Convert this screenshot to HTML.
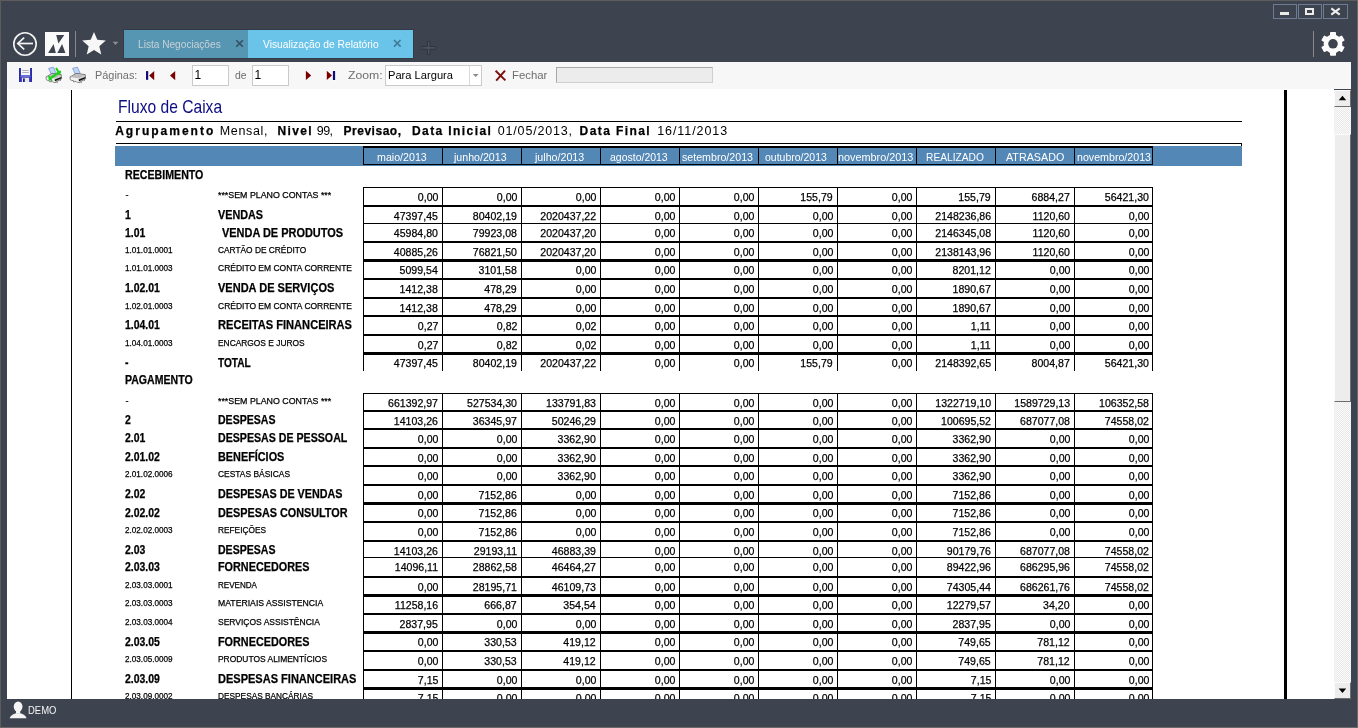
<!DOCTYPE html><html><head><meta charset="utf-8"><style>html,body{margin:0;padding:0;}body{width:1358px;height:728px;overflow:hidden;position:relative;background:#3e444f;font-family:"Liberation Sans",sans-serif;}body>div,body>span,.tl>span{position:absolute;}.tl{left:0;top:0;width:1358px;height:728px;will-change:transform;}span{white-space:pre;line-height:0;}.k{-webkit-text-stroke:0.25px currentColor;}</style></head><body><div style="left:0px;top:0px;width:1358px;height:1px;background:#5c5c5c;"></div>
<div style="left:0px;top:0px;width:1px;height:728px;background:#5c5c5c;"></div>
<div style="left:1357px;top:0px;width:1px;height:728px;background:#6a6a6a;"></div>
<div style="left:0px;top:727px;width:1358px;height:1px;background:#6a6a6a;"></div>
<div style="left:1273px;top:4px;width:24px;height:15px;background:transparent;box-sizing:border-box;border:1px solid #6b7c93;"></div>
<div style="left:1298px;top:4px;width:24px;height:15px;background:transparent;box-sizing:border-box;border:1px solid #6b7c93;"></div>
<div style="left:1323px;top:4px;width:25px;height:15px;background:transparent;box-sizing:border-box;border:1px solid #6b7c93;"></div>
<div style="left:1280px;top:12px;width:9px;height:3px;background:#e9e9e9;"></div>
<div style="left:1305px;top:8px;width:9px;height:7px;background:transparent;box-sizing:border-box;border:2px solid #ececec;border-top-width:2px;"></div>
<svg style="position:absolute;left:1329px;top:6px" width="13" height="11" viewBox="0 0 13 11"><path d="M2.3 2.4 L10.7 8.7 M10.7 2.4 L2.3 8.7" stroke="#ededed" stroke-width="2.1"/></svg>
<svg style="position:absolute;left:10px;top:29px" width="30" height="30" viewBox="0 0 30 30"><circle cx="15" cy="15" r="11.2" fill="none" stroke="#f4f4f4" stroke-width="1.6"/><path d="M7.6 14.5 H23" stroke="#f4f4f4" stroke-width="1.7" fill="none"/><path d="M14.2 8.6 L7.8 14.5 L14.2 20.4" stroke="#f4f4f4" stroke-width="1.7" fill="none"/></svg>
<svg style="position:absolute;left:45px;top:32px" width="24" height="24" viewBox="0 0 24 24"><rect width="24" height="24" fill="#fafafa"/><path d="M11.2 3 H19.3 L13.4 11.4 Z" fill="#3e444f"/><path d="M3.1 21 H10.8 L8.6 12.1 Z" fill="#3e444f"/><path d="M12.3 21 H20.4 L17.1 12.1 Z" fill="#3e444f"/></svg>
<div style="left:75px;top:31px;width:1px;height:26px;background:#8a8a8a;"></div>
<svg style="position:absolute;left:0;top:0" width="130" height="60"><polygon points="94.00,32.00 97.29,39.87 105.79,40.57 99.33,46.13 101.29,54.43 94.00,50.00 86.71,54.43 88.67,46.13 82.21,40.57 90.71,39.87" fill="#f7f7f7"/><path d="M112.6 41.8 H118.4 L115.5 45 Z" fill="#8e8e8e"/></svg>
<div style="left:123px;top:29px;width:291px;height:30px;background:#333b46;"></div>
<div style="left:124px;top:30px;width:124px;height:28px;background:#5796b3;"></div>
<div style="left:248px;top:30px;width:165px;height:28px;background:#6ac3e8;"></div>
<svg style="position:absolute;left:0;top:0" width="450" height="60"><path d="M236.3 40.3 L242.8 46.8 M242.8 40.3 L236.3 46.8" stroke="#34505f" stroke-width="1.6"/><path d="M394 40 L400.6 46.6 M400.6 40 L394 46.6" stroke="#3f7a96" stroke-width="1.6"/><path d="M428.7 41.3 V54.4 M421.8 47.9 H435.6" stroke="#2e353f" stroke-width="3.6"/><path d="M428.7 42 V53.7 M422.5 47.9 H434.9" stroke="#4a535f" stroke-width="1.6"/></svg>
<div style="left:1313px;top:31px;width:1px;height:26px;background:#8a8a8a;"></div>
<svg style="position:absolute;left:1318px;top:29px" width="30" height="30" viewBox="0 0 30 30"><g transform="translate(15 14.8)"><rect x="-3" y="-11.9" width="6" height="5.5" rx="0.8" fill="#fcfcfc" transform="rotate(0)"/><rect x="-3" y="-11.9" width="6" height="5.5" rx="0.8" fill="#fcfcfc" transform="rotate(60)"/><rect x="-3" y="-11.9" width="6" height="5.5" rx="0.8" fill="#fcfcfc" transform="rotate(120)"/><rect x="-3" y="-11.9" width="6" height="5.5" rx="0.8" fill="#fcfcfc" transform="rotate(180)"/><rect x="-3" y="-11.9" width="6" height="5.5" rx="0.8" fill="#fcfcfc" transform="rotate(240)"/><rect x="-3" y="-11.9" width="6" height="5.5" rx="0.8" fill="#fcfcfc" transform="rotate(300)"/><circle r="9.4" fill="#fcfcfc"/><circle r="4.8" fill="#3e444f"/></g></svg>
<div style="left:7px;top:62px;width:1344px;height:27px;background:#f7f7f7;"></div>
<svg style="position:absolute;left:18px;top:67px" width="15" height="16" viewBox="0 0 15 16"><path d="M1.5 1 H13.5 L14 1.6 V14.4 L13.4 15 H1.6 L1 14.4 V1.6 Z" fill="#4547c6"/><rect x="1" y="1" width="1.6" height="14" fill="#2a2ca6"/><rect x="12.4" y="1" width="1.6" height="14" fill="#2a2ca6"/><rect x="3" y="1" width="9" height="7.2" fill="#f6f6fb"/><path d="M4.2 3.5 H10.8 M4.2 5.5 H10.8" stroke="#b0b0b8" stroke-width="1"/><rect x="2.6" y="8.2" width="9.8" height="1.8" fill="#6d6fd8"/><rect x="4" y="10.8" width="7" height="4.2" fill="#ebe7e1"/><rect x="5" y="11.4" width="1.8" height="3.6" fill="#1c1c9a"/></svg>
<svg style="position:absolute;left:45px;top:66px" width="19" height="18" viewBox="0 0 19 18"><path d="M3.6 2.4 L8.4 1.2 L11.2 7.4 L6.4 8.4 Z" fill="#bcd9f7" stroke="#7f8fd6" stroke-width="0.8"/><path d="M1 11 L7.2 7.4 L16.2 8.6 L16.6 12.8 L10.2 16.6 L1.4 13.8 Z" fill="#d4d4d4" stroke="#6a6a6a" stroke-width="0.9"/><path d="M1.6 11 L7.4 7.9 L15.6 9 L9.8 12.4 Z" fill="#bdbdbd"/><path d="M1.6 11.2 L9.8 12.6 L10.2 16.2 L1.6 13.6 Z" fill="#f2f2f2"/><path d="M9.6 13.6 L16.2 11 L16.2 12.4 L10 15.2 Z" fill="#111"/><path d="M4.2 14.8 L5 16.4 M11.8 16 L12.6 17.2 M14.8 14 L16 14.6" stroke="#6a6a6a" stroke-width="0.8"/><path d="M4.6 12.8 L15 5.8" stroke="#1fd01f" stroke-width="2.4" stroke-linecap="round"/><path d="M11.4 2.6 L14.8 8" stroke="#1fd01f" stroke-width="2" stroke-linecap="round"/><path d="M4 10.6 L6.6 14.6" stroke="#1fd01f" stroke-width="1.8" stroke-linecap="round"/></svg>
<svg style="position:absolute;left:69px;top:66px" width="19" height="18" viewBox="0 0 19 18"><path d="M3.6 2.4 L8.4 1.2 L11.2 7.4 L6.4 8.4 Z" fill="#bcd9f7" stroke="#7f8fd6" stroke-width="0.8"/><path d="M1 11 L7.2 7.4 L16.2 8.6 L16.6 12.8 L10.2 16.6 L1.4 13.8 Z" fill="#d4d4d4" stroke="#6a6a6a" stroke-width="0.9"/><path d="M1.6 11 L7.4 7.9 L15.6 9 L9.8 12.4 Z" fill="#bdbdbd"/><path d="M1.6 11.2 L9.8 12.6 L10.2 16.2 L1.6 13.6 Z" fill="#f2f2f2"/><path d="M9.6 13.6 L16.2 11 L16.2 12.4 L10 15.2 Z" fill="#111"/><path d="M4.2 14.8 L5 16.4 M11.8 16 L12.6 17.2 M14.8 14 L16 14.6" stroke="#6a6a6a" stroke-width="0.8"/></svg>
<svg style="position:absolute;left:0;top:60px" width="340" height="30"><g stroke="#ffffff" stroke-width="1.2" stroke-linejoin="round" opacity="0.9"><rect x="146" y="11.1" width="2.2" height="8.7"/><path d="M154.2 10.9 V20.2 L149.1 15.55 Z"/><path d="M175.2 10.9 V20.2 L170 15.55 Z"/><path d="M305.9 10.8 V20 L311.2 15.4 Z"/><path d="M326.8 10.8 V20 L332 15.4 Z"/><rect x="332.9" y="11" width="2.2" height="9"/></g><rect x="146" y="11.1" width="2.2" height="8.7" fill="#0c0c80"/><path d="M154.2 10.9 V20.2 L149.1 15.55 Z" fill="#7a0000"/><path d="M175.2 10.9 V20.2 L170 15.55 Z" fill="#7a0000"/><path d="M305.9 10.8 V20 L311.2 15.4 Z" fill="#7a0000"/><path d="M326.8 10.8 V20 L332 15.4 Z" fill="#7a0000"/><rect x="332.9" y="11" width="2.2" height="9" fill="#0c0c80"/></svg>
<div style="left:192px;top:65px;width:37px;height:21px;background:#ffffff;box-sizing:border-box;border:1px solid #cacaca;"></div>
<div style="left:252px;top:65px;width:37px;height:21px;background:#ffffff;box-sizing:border-box;border:1px solid #cacaca;"></div>
<div style="left:385px;top:65px;width:97px;height:21px;background:#ffffff;box-sizing:border-box;border:1px solid #cacaca;"></div>
<div style="left:469px;top:66px;width:1px;height:19px;background:#dadada;"></div>
<svg style="position:absolute;left:0;top:60px" width="560" height="30"><path d="M472.8 14 H478.6 L475.7 17 Z" fill="#8a8a8a"/><path d="M495.6 10.8 L505.4 20.4 M505 10.6 L496.2 20.6" stroke="#7a1212" stroke-width="2"/></svg>
<div style="left:556px;top:67px;width:157px;height:16px;background:#ececec;box-sizing:border-box;border:1px solid #d0d0d0;border-top-color:#a8a8a8;border-left-color:#a8a8a8;"></div>
<div style="left:7px;top:89px;width:1327px;height:610px;background:#ffffff;"></div>
<div style="left:71px;top:90px;width:1px;height:609px;background:#000;"></div>
<div style="left:1284px;top:90px;width:3px;height:609px;background:#000;"></div>
<div style="left:116px;top:121px;width:1126px;height:1px;background:#000;"></div>
<div style="left:116px;top:143px;width:1126px;height:1px;background:#000;"></div>
<div style="left:1241px;top:143px;width:1px;height:3px;background:#000;"></div>
<div style="left:115px;top:146px;width:1127px;height:20px;background:#5387b5;"></div>
<div style="left:363px;top:146px;width:789px;height:2px;background:#000;"></div>
<div style="left:363px;top:164px;width:789px;height:1px;background:#000;"></div>
<div style="left:363px;top:146px;width:1px;height:19px;background:#000;"></div>
<div style="left:442px;top:146px;width:1px;height:19px;background:#000;"></div>
<div style="left:521px;top:146px;width:1px;height:19px;background:#000;"></div>
<div style="left:600px;top:146px;width:1px;height:19px;background:#000;"></div>
<div style="left:679px;top:146px;width:1px;height:19px;background:#000;"></div>
<div style="left:758px;top:146px;width:1px;height:19px;background:#000;"></div>
<div style="left:837px;top:146px;width:1px;height:19px;background:#000;"></div>
<div style="left:916px;top:146px;width:1px;height:19px;background:#000;"></div>
<div style="left:995px;top:146px;width:1px;height:19px;background:#000;"></div>
<div style="left:1074px;top:146px;width:1px;height:19px;background:#000;"></div>
<div style="left:1152px;top:146px;width:1px;height:19px;background:#000;"></div>
<div style="left:363px;top:187px;width:790px;height:1px;background:#000;"></div>
<div style="left:363px;top:205px;width:790px;height:2px;background:#000;"></div>
<div style="left:363px;top:223px;width:790px;height:1px;background:#000;"></div>
<div style="left:363px;top:241px;width:790px;height:2px;background:#000;"></div>
<div style="left:363px;top:259px;width:790px;height:3px;background:#000;"></div>
<div style="left:363px;top:278px;width:790px;height:2px;background:#000;"></div>
<div style="left:363px;top:297px;width:790px;height:2px;background:#000;"></div>
<div style="left:363px;top:315px;width:790px;height:2px;background:#000;"></div>
<div style="left:363px;top:334px;width:790px;height:2px;background:#000;"></div>
<div style="left:363px;top:352px;width:790px;height:3px;background:#000;"></div>
<div style="left:363px;top:393px;width:790px;height:1px;background:#000;"></div>
<div style="left:363px;top:410px;width:790px;height:2px;background:#000;"></div>
<div style="left:363px;top:428px;width:790px;height:2px;background:#000;"></div>
<div style="left:363px;top:447px;width:790px;height:2px;background:#000;"></div>
<div style="left:363px;top:465px;width:790px;height:2px;background:#000;"></div>
<div style="left:363px;top:484px;width:790px;height:2px;background:#000;"></div>
<div style="left:363px;top:502px;width:790px;height:3px;background:#000;"></div>
<div style="left:363px;top:521px;width:790px;height:2px;background:#000;"></div>
<div style="left:363px;top:540px;width:790px;height:2px;background:#000;"></div>
<div style="left:363px;top:557px;width:790px;height:1px;background:#000;"></div>
<div style="left:363px;top:576px;width:790px;height:2px;background:#000;"></div>
<div style="left:363px;top:594px;width:790px;height:3px;background:#000;"></div>
<div style="left:363px;top:613px;width:790px;height:2px;background:#000;"></div>
<div style="left:363px;top:631px;width:790px;height:3px;background:#000;"></div>
<div style="left:363px;top:650px;width:790px;height:2px;background:#000;"></div>
<div style="left:363px;top:669px;width:790px;height:2px;background:#000;"></div>
<div style="left:363px;top:687px;width:790px;height:3px;background:#000;"></div>
<div style="left:363px;top:187px;width:1px;height:184px;background:#000;"></div>
<div style="left:363px;top:393px;width:1px;height:306px;background:#000;"></div>
<div style="left:442px;top:187px;width:1px;height:184px;background:#000;"></div>
<div style="left:442px;top:393px;width:1px;height:306px;background:#000;"></div>
<div style="left:521px;top:187px;width:1px;height:184px;background:#000;"></div>
<div style="left:521px;top:393px;width:1px;height:306px;background:#000;"></div>
<div style="left:600px;top:187px;width:1px;height:184px;background:#000;"></div>
<div style="left:600px;top:393px;width:1px;height:306px;background:#000;"></div>
<div style="left:679px;top:187px;width:1px;height:184px;background:#000;"></div>
<div style="left:679px;top:393px;width:1px;height:306px;background:#000;"></div>
<div style="left:758px;top:187px;width:1px;height:184px;background:#000;"></div>
<div style="left:758px;top:393px;width:1px;height:306px;background:#000;"></div>
<div style="left:837px;top:187px;width:1px;height:184px;background:#000;"></div>
<div style="left:837px;top:393px;width:1px;height:306px;background:#000;"></div>
<div style="left:916px;top:187px;width:1px;height:184px;background:#000;"></div>
<div style="left:916px;top:393px;width:1px;height:306px;background:#000;"></div>
<div style="left:995px;top:187px;width:1px;height:184px;background:#000;"></div>
<div style="left:995px;top:393px;width:1px;height:306px;background:#000;"></div>
<div style="left:1074px;top:187px;width:1px;height:184px;background:#000;"></div>
<div style="left:1074px;top:393px;width:1px;height:306px;background:#000;"></div>
<div style="left:1152px;top:187px;width:1px;height:184px;background:#000;"></div>
<div style="left:1152px;top:393px;width:1px;height:306px;background:#000;"></div>
<div style="left:1334px;top:90px;width:17px;height:609px;background-color:#f3f3f3;background-image:repeating-conic-gradient(#e9e9e9 0 25%, #fbfbfb 0 50%);background-size:2px 2px;"></div>
<div style="left:1334px;top:90px;width:17px;height:17px;background:#ededed;box-sizing:border-box;border:1px solid #fbfbfb;border-right-color:#6e6e6e;border-bottom-color:#6e6e6e;"></div>
<svg style="position:absolute;left:1334px;top:90px" width="17" height="17"><path d="M4.7 10.3 H12.2 L8.45 5.8 Z" fill="#000"/></svg>
<div style="left:1334px;top:682px;width:17px;height:17px;background:#ededed;box-sizing:border-box;border:1px solid #fbfbfb;border-right-color:#6e6e6e;border-bottom-color:#6e6e6e;"></div>
<svg style="position:absolute;left:1334px;top:682px" width="17" height="17"><path d="M4.7 6.6 H12.2 L8.45 11.1 Z" fill="#000"/></svg>
<div style="left:1334px;top:134px;width:17px;height:268px;background:#ededed;box-sizing:border-box;border:1px solid #fbfbfb;border-right-color:#6e6e6e;border-bottom-color:#6e6e6e;"></div>
<div class="tl"><span id="t0" style="left:137.80px;top:44.06px;font-size:10.5px;font-weight:normal;color:#c9d1d6;transform:scaleX(0.9637);transform-origin:left;">Lista Negociações</span>
<span id="t1" style="left:262.60px;top:44.06px;font-size:10.5px;font-weight:normal;color:#ffffff;transform:scaleX(0.9772);transform-origin:left;">Visualização de Relatório</span>
<span id="t2" style="left:94.90px;top:75.21px;font-size:11.5px;font-weight:normal;color:#6e6e6e;transform:scaleX(0.9472);transform-origin:left;">Páginas:</span>
<span id="t3" style="left:194.60px;top:75.34px;font-size:12px;font-weight:normal;color:#000;">1</span>
<span id="t4" style="left:254.60px;top:75.34px;font-size:12px;font-weight:normal;color:#000;">1</span>
<span id="t5" style="left:234.70px;top:75.21px;font-size:11.5px;font-weight:normal;color:#6e6e6e;transform:scaleX(0.9065);transform-origin:left;">de</span>
<span id="t6" style="left:348.00px;top:75.21px;font-size:11.5px;font-weight:normal;color:#6e6e6e;transform:scaleX(1.0646);transform-origin:left;">Zoom:</span>
<span id="t7" style="left:387.60px;top:75.21px;font-size:11.5px;font-weight:normal;color:#000;transform:scaleX(0.9683);transform-origin:left;">Para Largura</span>
<span id="t8" style="left:512.00px;top:75.21px;font-size:11.5px;font-weight:normal;color:#6e6e6e;transform:scaleX(0.9889);transform-origin:left;">Fechar</span>
<span id="t9" style="left:118.40px;top:107.31px;font-size:19px;font-weight:normal;color:#0c0c84;transform:scaleX(0.8214);transform-origin:left;">Fluxo de Caixa</span>
<span id="t10" class="k" style="left:115.20px;top:131.04px;font-size:12px;font-weight:bold;color:#000;letter-spacing:2.010px;">Agrupamento</span>
<span id="t11" style="left:219.70px;top:130.86px;font-size:12.5px;font-weight:normal;color:#000;letter-spacing:0.670px;">Mensal,</span>
<span id="t12" class="k" style="left:277.50px;top:131.04px;font-size:12px;font-weight:bold;color:#000;letter-spacing:1.353px;">Nivel</span>
<span id="t13" style="left:316.80px;top:130.86px;font-size:12.5px;font-weight:normal;color:#000;letter-spacing:-0.595px;">99,</span>
<span id="t14" class="k" style="left:343.50px;top:131.04px;font-size:12px;font-weight:bold;color:#000;letter-spacing:0.516px;">Previsao,</span>
<span id="t15" class="k" style="left:412.00px;top:131.04px;font-size:12px;font-weight:bold;color:#000;letter-spacing:1.404px;">Data Inicial</span>
<span id="t16" style="left:497.80px;top:130.86px;font-size:12.5px;font-weight:normal;color:#000;letter-spacing:0.815px;">01/05/2013,</span>
<span id="t17" class="k" style="left:579.60px;top:131.04px;font-size:12px;font-weight:bold;color:#000;letter-spacing:1.405px;">Data Final</span>
<span id="t18" style="left:657.20px;top:130.86px;font-size:12.5px;font-weight:normal;color:#000;letter-spacing:0.929px;">16/11/2013</span>
<span id="t19" style="left:376.60px;top:157.45px;font-size:10.8px;font-weight:normal;color:#ffffff;transform:scaleX(0.9877);transform-origin:left;">maio/2013</span>
<span id="t20" style="left:453.60px;top:157.45px;font-size:10.8px;font-weight:normal;color:#ffffff;transform:scaleX(0.9843);transform-origin:left;">junho/2013</span>
<span id="t21" style="left:534.90px;top:157.45px;font-size:10.8px;font-weight:normal;color:#ffffff;transform:scaleX(0.9871);transform-origin:left;">julho/2013</span>
<span id="t22" style="left:610.40px;top:157.45px;font-size:10.8px;font-weight:normal;color:#ffffff;transform:scaleX(0.9708);transform-origin:left;">agosto/2013</span>
<span id="t23" style="left:682.30px;top:157.45px;font-size:10.8px;font-weight:normal;color:#ffffff;transform:scaleX(0.9857);transform-origin:left;">setembro/2013</span>
<span id="t24" style="left:765.30px;top:157.45px;font-size:10.8px;font-weight:normal;color:#ffffff;transform:scaleX(0.9711);transform-origin:left;">outubro/2013</span>
<span id="t25" style="left:837.60px;top:157.45px;font-size:10.8px;font-weight:normal;color:#ffffff;transform:scaleX(1.0049);transform-origin:left;">novembro/2013</span>
<span id="t26" style="left:926.40px;top:157.45px;font-size:10.8px;font-weight:normal;color:#ffffff;transform:scaleX(0.9460);transform-origin:left;">REALIZADO</span>
<span id="t27" style="left:1005.50px;top:157.45px;font-size:10.8px;font-weight:normal;color:#ffffff;transform:scaleX(0.9950);transform-origin:left;">ATRASADO</span>
<span id="t28" style="left:1076.80px;top:157.45px;font-size:10.8px;font-weight:normal;color:#ffffff;transform:scaleX(0.9863);transform-origin:left;">novembro/2013</span>
<span id="t29" class="k" style="left:124.80px;top:174.84px;font-size:12px;font-weight:bold;color:#000;transform:scaleX(0.8863);transform-origin:left;">RECEBIMENTO</span>
<span id="t30" class="k" style="left:124.60px;top:379.84px;font-size:12px;font-weight:bold;color:#000;transform:scaleX(0.8790);transform-origin:left;">PAGAMENTO</span>
<span id="t31" class="k" style="left:125.60px;top:195.08px;font-size:9px;font-weight:normal;color:#000;">-</span>
<span id="t32" class="k" style="left:218.20px;top:195.08px;font-size:9px;font-weight:normal;color:#000;transform:scaleX(0.9811);transform-origin:left;">***SEM PLANO CONTAS ***</span>
<span id="t33" class="k" style="right:920.00px;top:197.18px;font-size:11px;font-weight:normal;color:#000;transform:scaleX(0.9600);transform-origin:right;">0,00</span>
<span id="t34" class="k" style="right:841.00px;top:197.18px;font-size:11px;font-weight:normal;color:#000;transform:scaleX(0.9600);transform-origin:right;">0,00</span>
<span id="t35" class="k" style="right:762.00px;top:197.18px;font-size:11px;font-weight:normal;color:#000;transform:scaleX(0.9600);transform-origin:right;">0,00</span>
<span id="t36" class="k" style="right:683.00px;top:197.18px;font-size:11px;font-weight:normal;color:#000;transform:scaleX(0.9600);transform-origin:right;">0,00</span>
<span id="t37" class="k" style="right:604.00px;top:197.18px;font-size:11px;font-weight:normal;color:#000;transform:scaleX(0.9600);transform-origin:right;">0,00</span>
<span id="t38" class="k" style="right:525.00px;top:197.18px;font-size:11px;font-weight:normal;color:#000;transform:scaleX(0.9600);transform-origin:right;">155,79</span>
<span id="t39" class="k" style="right:446.00px;top:197.18px;font-size:11px;font-weight:normal;color:#000;transform:scaleX(0.9600);transform-origin:right;">0,00</span>
<span id="t40" class="k" style="right:367.00px;top:197.18px;font-size:11px;font-weight:normal;color:#000;transform:scaleX(0.9600);transform-origin:right;">155,79</span>
<span id="t41" class="k" style="right:288.00px;top:197.18px;font-size:11px;font-weight:normal;color:#000;transform:scaleX(0.9600);transform-origin:right;">6884,27</span>
<span id="t42" class="k" style="right:209.00px;top:197.18px;font-size:11px;font-weight:normal;color:#000;transform:scaleX(0.9600);transform-origin:right;">56421,30</span>
<span id="t43" class="k" style="left:125.00px;top:215.04px;font-size:12px;font-weight:bold;color:#000;transform:scaleX(0.8700);transform-origin:left;">1</span>
<span id="t44" class="k" style="left:218.20px;top:215.04px;font-size:12px;font-weight:bold;color:#000;transform:scaleX(0.8997);transform-origin:left;">VENDAS</span>
<span id="t45" class="k" style="right:920.00px;top:216.18px;font-size:11px;font-weight:normal;color:#000;transform:scaleX(0.9600);transform-origin:right;">47397,45</span>
<span id="t46" class="k" style="right:841.00px;top:216.18px;font-size:11px;font-weight:normal;color:#000;transform:scaleX(0.9600);transform-origin:right;">80402,19</span>
<span id="t47" class="k" style="right:762.00px;top:216.18px;font-size:11px;font-weight:normal;color:#000;transform:scaleX(0.9600);transform-origin:right;">2020437,22</span>
<span id="t48" class="k" style="right:683.00px;top:216.18px;font-size:11px;font-weight:normal;color:#000;transform:scaleX(0.9600);transform-origin:right;">0,00</span>
<span id="t49" class="k" style="right:604.00px;top:216.18px;font-size:11px;font-weight:normal;color:#000;transform:scaleX(0.9600);transform-origin:right;">0,00</span>
<span id="t50" class="k" style="right:525.00px;top:216.18px;font-size:11px;font-weight:normal;color:#000;transform:scaleX(0.9600);transform-origin:right;">0,00</span>
<span id="t51" class="k" style="right:446.00px;top:216.18px;font-size:11px;font-weight:normal;color:#000;transform:scaleX(0.9600);transform-origin:right;">0,00</span>
<span id="t52" class="k" style="right:367.00px;top:216.18px;font-size:11px;font-weight:normal;color:#000;transform:scaleX(0.9600);transform-origin:right;">2148236,86</span>
<span id="t53" class="k" style="right:288.00px;top:216.18px;font-size:11px;font-weight:normal;color:#000;transform:scaleX(0.9600);transform-origin:right;">1120,60</span>
<span id="t54" class="k" style="right:209.00px;top:216.18px;font-size:11px;font-weight:normal;color:#000;transform:scaleX(0.9600);transform-origin:right;">0,00</span>
<span id="t55" class="k" style="left:125.00px;top:232.54px;font-size:12px;font-weight:bold;color:#000;transform:scaleX(0.8700);transform-origin:left;">1.01</span>
<span id="t56" class="k" style="left:221.70px;top:232.54px;font-size:12px;font-weight:bold;color:#000;transform:scaleX(0.9119);transform-origin:left;">VENDA DE PRODUTOS</span>
<span id="t57" class="k" style="right:920.00px;top:233.18px;font-size:11px;font-weight:normal;color:#000;transform:scaleX(0.9600);transform-origin:right;">45984,80</span>
<span id="t58" class="k" style="right:841.00px;top:233.18px;font-size:11px;font-weight:normal;color:#000;transform:scaleX(0.9600);transform-origin:right;">79923,08</span>
<span id="t59" class="k" style="right:762.00px;top:233.18px;font-size:11px;font-weight:normal;color:#000;transform:scaleX(0.9600);transform-origin:right;">2020437,20</span>
<span id="t60" class="k" style="right:683.00px;top:233.18px;font-size:11px;font-weight:normal;color:#000;transform:scaleX(0.9600);transform-origin:right;">0,00</span>
<span id="t61" class="k" style="right:604.00px;top:233.18px;font-size:11px;font-weight:normal;color:#000;transform:scaleX(0.9600);transform-origin:right;">0,00</span>
<span id="t62" class="k" style="right:525.00px;top:233.18px;font-size:11px;font-weight:normal;color:#000;transform:scaleX(0.9600);transform-origin:right;">0,00</span>
<span id="t63" class="k" style="right:446.00px;top:233.18px;font-size:11px;font-weight:normal;color:#000;transform:scaleX(0.9600);transform-origin:right;">0,00</span>
<span id="t64" class="k" style="right:367.00px;top:233.18px;font-size:11px;font-weight:normal;color:#000;transform:scaleX(0.9600);transform-origin:right;">2146345,08</span>
<span id="t65" class="k" style="right:288.00px;top:233.18px;font-size:11px;font-weight:normal;color:#000;transform:scaleX(0.9600);transform-origin:right;">1120,60</span>
<span id="t66" class="k" style="right:209.00px;top:233.18px;font-size:11px;font-weight:normal;color:#000;transform:scaleX(0.9600);transform-origin:right;">0,00</span>
<span id="t67" class="k" style="left:125.40px;top:249.58px;font-size:9px;font-weight:normal;color:#000;transform:scaleX(0.9056);transform-origin:left;">1.01.01.0001</span>
<span id="t68" class="k" style="left:218.20px;top:249.58px;font-size:9px;font-weight:normal;color:#000;transform:scaleX(0.9266);transform-origin:left;">CARTÃO DE CRÉDITO</span>
<span id="t69" class="k" style="right:920.00px;top:252.18px;font-size:11px;font-weight:normal;color:#000;transform:scaleX(0.9600);transform-origin:right;">40885,26</span>
<span id="t70" class="k" style="right:841.00px;top:252.18px;font-size:11px;font-weight:normal;color:#000;transform:scaleX(0.9600);transform-origin:right;">76821,50</span>
<span id="t71" class="k" style="right:762.00px;top:252.18px;font-size:11px;font-weight:normal;color:#000;transform:scaleX(0.9600);transform-origin:right;">2020437,20</span>
<span id="t72" class="k" style="right:683.00px;top:252.18px;font-size:11px;font-weight:normal;color:#000;transform:scaleX(0.9600);transform-origin:right;">0,00</span>
<span id="t73" class="k" style="right:604.00px;top:252.18px;font-size:11px;font-weight:normal;color:#000;transform:scaleX(0.9600);transform-origin:right;">0,00</span>
<span id="t74" class="k" style="right:525.00px;top:252.18px;font-size:11px;font-weight:normal;color:#000;transform:scaleX(0.9600);transform-origin:right;">0,00</span>
<span id="t75" class="k" style="right:446.00px;top:252.18px;font-size:11px;font-weight:normal;color:#000;transform:scaleX(0.9600);transform-origin:right;">0,00</span>
<span id="t76" class="k" style="right:367.00px;top:252.18px;font-size:11px;font-weight:normal;color:#000;transform:scaleX(0.9600);transform-origin:right;">2138143,96</span>
<span id="t77" class="k" style="right:288.00px;top:252.18px;font-size:11px;font-weight:normal;color:#000;transform:scaleX(0.9600);transform-origin:right;">1120,60</span>
<span id="t78" class="k" style="right:209.00px;top:252.18px;font-size:11px;font-weight:normal;color:#000;transform:scaleX(0.9600);transform-origin:right;">0,00</span>
<span id="t79" class="k" style="left:125.40px;top:268.08px;font-size:9px;font-weight:normal;color:#000;transform:scaleX(0.9056);transform-origin:left;">1.01.01.0003</span>
<span id="t80" class="k" style="left:218.20px;top:268.08px;font-size:9px;font-weight:normal;color:#000;transform:scaleX(0.9424);transform-origin:left;">CRÉDITO EM CONTA CORRENTE</span>
<span id="t81" class="k" style="right:920.00px;top:270.18px;font-size:11px;font-weight:normal;color:#000;transform:scaleX(0.9600);transform-origin:right;">5099,54</span>
<span id="t82" class="k" style="right:841.00px;top:270.18px;font-size:11px;font-weight:normal;color:#000;transform:scaleX(0.9600);transform-origin:right;">3101,58</span>
<span id="t83" class="k" style="right:762.00px;top:270.18px;font-size:11px;font-weight:normal;color:#000;transform:scaleX(0.9600);transform-origin:right;">0,00</span>
<span id="t84" class="k" style="right:683.00px;top:270.18px;font-size:11px;font-weight:normal;color:#000;transform:scaleX(0.9600);transform-origin:right;">0,00</span>
<span id="t85" class="k" style="right:604.00px;top:270.18px;font-size:11px;font-weight:normal;color:#000;transform:scaleX(0.9600);transform-origin:right;">0,00</span>
<span id="t86" class="k" style="right:525.00px;top:270.18px;font-size:11px;font-weight:normal;color:#000;transform:scaleX(0.9600);transform-origin:right;">0,00</span>
<span id="t87" class="k" style="right:446.00px;top:270.18px;font-size:11px;font-weight:normal;color:#000;transform:scaleX(0.9600);transform-origin:right;">0,00</span>
<span id="t88" class="k" style="right:367.00px;top:270.18px;font-size:11px;font-weight:normal;color:#000;transform:scaleX(0.9600);transform-origin:right;">8201,12</span>
<span id="t89" class="k" style="right:288.00px;top:270.18px;font-size:11px;font-weight:normal;color:#000;transform:scaleX(0.9600);transform-origin:right;">0,00</span>
<span id="t90" class="k" style="right:209.00px;top:270.18px;font-size:11px;font-weight:normal;color:#000;transform:scaleX(0.9600);transform-origin:right;">0,00</span>
<span id="t91" class="k" style="left:125.00px;top:288.04px;font-size:12px;font-weight:bold;color:#000;transform:scaleX(0.8700);transform-origin:left;">1.02.01</span>
<span id="t92" class="k" style="left:218.20px;top:288.04px;font-size:12px;font-weight:bold;color:#000;transform:scaleX(0.9179);transform-origin:left;">VENDA DE SERVIÇOS</span>
<span id="t93" class="k" style="right:920.00px;top:289.18px;font-size:11px;font-weight:normal;color:#000;transform:scaleX(0.9600);transform-origin:right;">1412,38</span>
<span id="t94" class="k" style="right:841.00px;top:289.18px;font-size:11px;font-weight:normal;color:#000;transform:scaleX(0.9600);transform-origin:right;">478,29</span>
<span id="t95" class="k" style="right:762.00px;top:289.18px;font-size:11px;font-weight:normal;color:#000;transform:scaleX(0.9600);transform-origin:right;">0,00</span>
<span id="t96" class="k" style="right:683.00px;top:289.18px;font-size:11px;font-weight:normal;color:#000;transform:scaleX(0.9600);transform-origin:right;">0,00</span>
<span id="t97" class="k" style="right:604.00px;top:289.18px;font-size:11px;font-weight:normal;color:#000;transform:scaleX(0.9600);transform-origin:right;">0,00</span>
<span id="t98" class="k" style="right:525.00px;top:289.18px;font-size:11px;font-weight:normal;color:#000;transform:scaleX(0.9600);transform-origin:right;">0,00</span>
<span id="t99" class="k" style="right:446.00px;top:289.18px;font-size:11px;font-weight:normal;color:#000;transform:scaleX(0.9600);transform-origin:right;">0,00</span>
<span id="t100" class="k" style="right:367.00px;top:289.18px;font-size:11px;font-weight:normal;color:#000;transform:scaleX(0.9600);transform-origin:right;">1890,67</span>
<span id="t101" class="k" style="right:288.00px;top:289.18px;font-size:11px;font-weight:normal;color:#000;transform:scaleX(0.9600);transform-origin:right;">0,00</span>
<span id="t102" class="k" style="right:209.00px;top:289.18px;font-size:11px;font-weight:normal;color:#000;transform:scaleX(0.9600);transform-origin:right;">0,00</span>
<span id="t103" class="k" style="left:125.40px;top:305.58px;font-size:9px;font-weight:normal;color:#000;transform:scaleX(0.9056);transform-origin:left;">1.02.01.0003</span>
<span id="t104" class="k" style="left:218.20px;top:305.58px;font-size:9px;font-weight:normal;color:#000;transform:scaleX(0.9424);transform-origin:left;">CRÉDITO EM CONTA CORRENTE</span>
<span id="t105" class="k" style="right:920.00px;top:308.18px;font-size:11px;font-weight:normal;color:#000;transform:scaleX(0.9600);transform-origin:right;">1412,38</span>
<span id="t106" class="k" style="right:841.00px;top:308.18px;font-size:11px;font-weight:normal;color:#000;transform:scaleX(0.9600);transform-origin:right;">478,29</span>
<span id="t107" class="k" style="right:762.00px;top:308.18px;font-size:11px;font-weight:normal;color:#000;transform:scaleX(0.9600);transform-origin:right;">0,00</span>
<span id="t108" class="k" style="right:683.00px;top:308.18px;font-size:11px;font-weight:normal;color:#000;transform:scaleX(0.9600);transform-origin:right;">0,00</span>
<span id="t109" class="k" style="right:604.00px;top:308.18px;font-size:11px;font-weight:normal;color:#000;transform:scaleX(0.9600);transform-origin:right;">0,00</span>
<span id="t110" class="k" style="right:525.00px;top:308.18px;font-size:11px;font-weight:normal;color:#000;transform:scaleX(0.9600);transform-origin:right;">0,00</span>
<span id="t111" class="k" style="right:446.00px;top:308.18px;font-size:11px;font-weight:normal;color:#000;transform:scaleX(0.9600);transform-origin:right;">0,00</span>
<span id="t112" class="k" style="right:367.00px;top:308.18px;font-size:11px;font-weight:normal;color:#000;transform:scaleX(0.9600);transform-origin:right;">1890,67</span>
<span id="t113" class="k" style="right:288.00px;top:308.18px;font-size:11px;font-weight:normal;color:#000;transform:scaleX(0.9600);transform-origin:right;">0,00</span>
<span id="t114" class="k" style="right:209.00px;top:308.18px;font-size:11px;font-weight:normal;color:#000;transform:scaleX(0.9600);transform-origin:right;">0,00</span>
<span id="t115" class="k" style="left:125.00px;top:325.04px;font-size:12px;font-weight:bold;color:#000;transform:scaleX(0.8700);transform-origin:left;">1.04.01</span>
<span id="t116" class="k" style="left:218.20px;top:325.04px;font-size:12px;font-weight:bold;color:#000;transform:scaleX(0.9233);transform-origin:left;">RECEITAS FINANCEIRAS</span>
<span id="t117" class="k" style="right:920.00px;top:326.18px;font-size:11px;font-weight:normal;color:#000;transform:scaleX(0.9600);transform-origin:right;">0,27</span>
<span id="t118" class="k" style="right:841.00px;top:326.18px;font-size:11px;font-weight:normal;color:#000;transform:scaleX(0.9600);transform-origin:right;">0,82</span>
<span id="t119" class="k" style="right:762.00px;top:326.18px;font-size:11px;font-weight:normal;color:#000;transform:scaleX(0.9600);transform-origin:right;">0,02</span>
<span id="t120" class="k" style="right:683.00px;top:326.18px;font-size:11px;font-weight:normal;color:#000;transform:scaleX(0.9600);transform-origin:right;">0,00</span>
<span id="t121" class="k" style="right:604.00px;top:326.18px;font-size:11px;font-weight:normal;color:#000;transform:scaleX(0.9600);transform-origin:right;">0,00</span>
<span id="t122" class="k" style="right:525.00px;top:326.18px;font-size:11px;font-weight:normal;color:#000;transform:scaleX(0.9600);transform-origin:right;">0,00</span>
<span id="t123" class="k" style="right:446.00px;top:326.18px;font-size:11px;font-weight:normal;color:#000;transform:scaleX(0.9600);transform-origin:right;">0,00</span>
<span id="t124" class="k" style="right:367.00px;top:326.18px;font-size:11px;font-weight:normal;color:#000;transform:scaleX(0.9600);transform-origin:right;">1,11</span>
<span id="t125" class="k" style="right:288.00px;top:326.18px;font-size:11px;font-weight:normal;color:#000;transform:scaleX(0.9600);transform-origin:right;">0,00</span>
<span id="t126" class="k" style="right:209.00px;top:326.18px;font-size:11px;font-weight:normal;color:#000;transform:scaleX(0.9600);transform-origin:right;">0,00</span>
<span id="t127" class="k" style="left:125.40px;top:342.58px;font-size:9px;font-weight:normal;color:#000;transform:scaleX(0.9056);transform-origin:left;">1.04.01.0003</span>
<span id="t128" class="k" style="left:218.20px;top:342.58px;font-size:9px;font-weight:normal;color:#000;transform:scaleX(0.9310);transform-origin:left;">ENCARGOS E JUROS</span>
<span id="t129" class="k" style="right:920.00px;top:345.18px;font-size:11px;font-weight:normal;color:#000;transform:scaleX(0.9600);transform-origin:right;">0,27</span>
<span id="t130" class="k" style="right:841.00px;top:345.18px;font-size:11px;font-weight:normal;color:#000;transform:scaleX(0.9600);transform-origin:right;">0,82</span>
<span id="t131" class="k" style="right:762.00px;top:345.18px;font-size:11px;font-weight:normal;color:#000;transform:scaleX(0.9600);transform-origin:right;">0,02</span>
<span id="t132" class="k" style="right:683.00px;top:345.18px;font-size:11px;font-weight:normal;color:#000;transform:scaleX(0.9600);transform-origin:right;">0,00</span>
<span id="t133" class="k" style="right:604.00px;top:345.18px;font-size:11px;font-weight:normal;color:#000;transform:scaleX(0.9600);transform-origin:right;">0,00</span>
<span id="t134" class="k" style="right:525.00px;top:345.18px;font-size:11px;font-weight:normal;color:#000;transform:scaleX(0.9600);transform-origin:right;">0,00</span>
<span id="t135" class="k" style="right:446.00px;top:345.18px;font-size:11px;font-weight:normal;color:#000;transform:scaleX(0.9600);transform-origin:right;">0,00</span>
<span id="t136" class="k" style="right:367.00px;top:345.18px;font-size:11px;font-weight:normal;color:#000;transform:scaleX(0.9600);transform-origin:right;">1,11</span>
<span id="t137" class="k" style="right:288.00px;top:345.18px;font-size:11px;font-weight:normal;color:#000;transform:scaleX(0.9600);transform-origin:right;">0,00</span>
<span id="t138" class="k" style="right:209.00px;top:345.18px;font-size:11px;font-weight:normal;color:#000;transform:scaleX(0.9600);transform-origin:right;">0,00</span>
<span id="t139" class="k" style="left:125.00px;top:362.54px;font-size:12px;font-weight:bold;color:#000;transform:scaleX(0.8700);transform-origin:left;">-</span>
<span id="t140" class="k" style="left:218.20px;top:362.54px;font-size:12px;font-weight:bold;color:#000;transform:scaleX(0.8434);transform-origin:left;">TOTAL</span>
<span id="t141" class="k" style="right:920.00px;top:363.18px;font-size:11px;font-weight:normal;color:#000;transform:scaleX(0.9600);transform-origin:right;">47397,45</span>
<span id="t142" class="k" style="right:841.00px;top:363.18px;font-size:11px;font-weight:normal;color:#000;transform:scaleX(0.9600);transform-origin:right;">80402,19</span>
<span id="t143" class="k" style="right:762.00px;top:363.18px;font-size:11px;font-weight:normal;color:#000;transform:scaleX(0.9600);transform-origin:right;">2020437,22</span>
<span id="t144" class="k" style="right:683.00px;top:363.18px;font-size:11px;font-weight:normal;color:#000;transform:scaleX(0.9600);transform-origin:right;">0,00</span>
<span id="t145" class="k" style="right:604.00px;top:363.18px;font-size:11px;font-weight:normal;color:#000;transform:scaleX(0.9600);transform-origin:right;">0,00</span>
<span id="t146" class="k" style="right:525.00px;top:363.18px;font-size:11px;font-weight:normal;color:#000;transform:scaleX(0.9600);transform-origin:right;">155,79</span>
<span id="t147" class="k" style="right:446.00px;top:363.18px;font-size:11px;font-weight:normal;color:#000;transform:scaleX(0.9600);transform-origin:right;">0,00</span>
<span id="t148" class="k" style="right:367.00px;top:363.18px;font-size:11px;font-weight:normal;color:#000;transform:scaleX(0.9600);transform-origin:right;">2148392,65</span>
<span id="t149" class="k" style="right:288.00px;top:363.18px;font-size:11px;font-weight:normal;color:#000;transform:scaleX(0.9600);transform-origin:right;">8004,87</span>
<span id="t150" class="k" style="right:209.00px;top:363.18px;font-size:11px;font-weight:normal;color:#000;transform:scaleX(0.9600);transform-origin:right;">56421,30</span>
<span id="t151" class="k" style="left:125.60px;top:401.08px;font-size:9px;font-weight:normal;color:#000;">-</span>
<span id="t152" class="k" style="left:218.20px;top:401.08px;font-size:9px;font-weight:normal;color:#000;transform:scaleX(0.9811);transform-origin:left;">***SEM PLANO CONTAS ***</span>
<span id="t153" class="k" style="right:920.00px;top:403.18px;font-size:11px;font-weight:normal;color:#000;transform:scaleX(0.9600);transform-origin:right;">661392,97</span>
<span id="t154" class="k" style="right:841.00px;top:403.18px;font-size:11px;font-weight:normal;color:#000;transform:scaleX(0.9600);transform-origin:right;">527534,30</span>
<span id="t155" class="k" style="right:762.00px;top:403.18px;font-size:11px;font-weight:normal;color:#000;transform:scaleX(0.9600);transform-origin:right;">133791,83</span>
<span id="t156" class="k" style="right:683.00px;top:403.18px;font-size:11px;font-weight:normal;color:#000;transform:scaleX(0.9600);transform-origin:right;">0,00</span>
<span id="t157" class="k" style="right:604.00px;top:403.18px;font-size:11px;font-weight:normal;color:#000;transform:scaleX(0.9600);transform-origin:right;">0,00</span>
<span id="t158" class="k" style="right:525.00px;top:403.18px;font-size:11px;font-weight:normal;color:#000;transform:scaleX(0.9600);transform-origin:right;">0,00</span>
<span id="t159" class="k" style="right:446.00px;top:403.18px;font-size:11px;font-weight:normal;color:#000;transform:scaleX(0.9600);transform-origin:right;">0,00</span>
<span id="t160" class="k" style="right:367.00px;top:403.18px;font-size:11px;font-weight:normal;color:#000;transform:scaleX(0.9600);transform-origin:right;">1322719,10</span>
<span id="t161" class="k" style="right:288.00px;top:403.18px;font-size:11px;font-weight:normal;color:#000;transform:scaleX(0.9600);transform-origin:right;">1589729,13</span>
<span id="t162" class="k" style="right:209.00px;top:403.18px;font-size:11px;font-weight:normal;color:#000;transform:scaleX(0.9600);transform-origin:right;">106352,58</span>
<span id="t163" class="k" style="left:125.00px;top:420.04px;font-size:12px;font-weight:bold;color:#000;transform:scaleX(0.8700);transform-origin:left;">2</span>
<span id="t164" class="k" style="left:218.20px;top:420.04px;font-size:12px;font-weight:bold;color:#000;transform:scaleX(0.8798);transform-origin:left;">DESPESAS</span>
<span id="t165" class="k" style="right:920.00px;top:421.18px;font-size:11px;font-weight:normal;color:#000;transform:scaleX(0.9600);transform-origin:right;">14103,26</span>
<span id="t166" class="k" style="right:841.00px;top:421.18px;font-size:11px;font-weight:normal;color:#000;transform:scaleX(0.9600);transform-origin:right;">36345,97</span>
<span id="t167" class="k" style="right:762.00px;top:421.18px;font-size:11px;font-weight:normal;color:#000;transform:scaleX(0.9600);transform-origin:right;">50246,29</span>
<span id="t168" class="k" style="right:683.00px;top:421.18px;font-size:11px;font-weight:normal;color:#000;transform:scaleX(0.9600);transform-origin:right;">0,00</span>
<span id="t169" class="k" style="right:604.00px;top:421.18px;font-size:11px;font-weight:normal;color:#000;transform:scaleX(0.9600);transform-origin:right;">0,00</span>
<span id="t170" class="k" style="right:525.00px;top:421.18px;font-size:11px;font-weight:normal;color:#000;transform:scaleX(0.9600);transform-origin:right;">0,00</span>
<span id="t171" class="k" style="right:446.00px;top:421.18px;font-size:11px;font-weight:normal;color:#000;transform:scaleX(0.9600);transform-origin:right;">0,00</span>
<span id="t172" class="k" style="right:367.00px;top:421.18px;font-size:11px;font-weight:normal;color:#000;transform:scaleX(0.9600);transform-origin:right;">100695,52</span>
<span id="t173" class="k" style="right:288.00px;top:421.18px;font-size:11px;font-weight:normal;color:#000;transform:scaleX(0.9600);transform-origin:right;">687077,08</span>
<span id="t174" class="k" style="right:209.00px;top:421.18px;font-size:11px;font-weight:normal;color:#000;transform:scaleX(0.9600);transform-origin:right;">74558,02</span>
<span id="t175" class="k" style="left:125.00px;top:438.04px;font-size:12px;font-weight:bold;color:#000;transform:scaleX(0.8700);transform-origin:left;">2.01</span>
<span id="t176" class="k" style="left:218.20px;top:438.04px;font-size:12px;font-weight:bold;color:#000;transform:scaleX(0.8853);transform-origin:left;">DESPESAS DE PESSOAL</span>
<span id="t177" class="k" style="right:920.00px;top:439.18px;font-size:11px;font-weight:normal;color:#000;transform:scaleX(0.9600);transform-origin:right;">0,00</span>
<span id="t178" class="k" style="right:841.00px;top:439.18px;font-size:11px;font-weight:normal;color:#000;transform:scaleX(0.9600);transform-origin:right;">0,00</span>
<span id="t179" class="k" style="right:762.00px;top:439.18px;font-size:11px;font-weight:normal;color:#000;transform:scaleX(0.9600);transform-origin:right;">3362,90</span>
<span id="t180" class="k" style="right:683.00px;top:439.18px;font-size:11px;font-weight:normal;color:#000;transform:scaleX(0.9600);transform-origin:right;">0,00</span>
<span id="t181" class="k" style="right:604.00px;top:439.18px;font-size:11px;font-weight:normal;color:#000;transform:scaleX(0.9600);transform-origin:right;">0,00</span>
<span id="t182" class="k" style="right:525.00px;top:439.18px;font-size:11px;font-weight:normal;color:#000;transform:scaleX(0.9600);transform-origin:right;">0,00</span>
<span id="t183" class="k" style="right:446.00px;top:439.18px;font-size:11px;font-weight:normal;color:#000;transform:scaleX(0.9600);transform-origin:right;">0,00</span>
<span id="t184" class="k" style="right:367.00px;top:439.18px;font-size:11px;font-weight:normal;color:#000;transform:scaleX(0.9600);transform-origin:right;">3362,90</span>
<span id="t185" class="k" style="right:288.00px;top:439.18px;font-size:11px;font-weight:normal;color:#000;transform:scaleX(0.9600);transform-origin:right;">0,00</span>
<span id="t186" class="k" style="right:209.00px;top:439.18px;font-size:11px;font-weight:normal;color:#000;transform:scaleX(0.9600);transform-origin:right;">0,00</span>
<span id="t187" class="k" style="left:125.00px;top:457.04px;font-size:12px;font-weight:bold;color:#000;transform:scaleX(0.8700);transform-origin:left;">2.01.02</span>
<span id="t188" class="k" style="left:218.20px;top:457.04px;font-size:12px;font-weight:bold;color:#000;transform:scaleX(0.9040);transform-origin:left;">BENEFÍCIOS</span>
<span id="t189" class="k" style="right:920.00px;top:458.18px;font-size:11px;font-weight:normal;color:#000;transform:scaleX(0.9600);transform-origin:right;">0,00</span>
<span id="t190" class="k" style="right:841.00px;top:458.18px;font-size:11px;font-weight:normal;color:#000;transform:scaleX(0.9600);transform-origin:right;">0,00</span>
<span id="t191" class="k" style="right:762.00px;top:458.18px;font-size:11px;font-weight:normal;color:#000;transform:scaleX(0.9600);transform-origin:right;">3362,90</span>
<span id="t192" class="k" style="right:683.00px;top:458.18px;font-size:11px;font-weight:normal;color:#000;transform:scaleX(0.9600);transform-origin:right;">0,00</span>
<span id="t193" class="k" style="right:604.00px;top:458.18px;font-size:11px;font-weight:normal;color:#000;transform:scaleX(0.9600);transform-origin:right;">0,00</span>
<span id="t194" class="k" style="right:525.00px;top:458.18px;font-size:11px;font-weight:normal;color:#000;transform:scaleX(0.9600);transform-origin:right;">0,00</span>
<span id="t195" class="k" style="right:446.00px;top:458.18px;font-size:11px;font-weight:normal;color:#000;transform:scaleX(0.9600);transform-origin:right;">0,00</span>
<span id="t196" class="k" style="right:367.00px;top:458.18px;font-size:11px;font-weight:normal;color:#000;transform:scaleX(0.9600);transform-origin:right;">3362,90</span>
<span id="t197" class="k" style="right:288.00px;top:458.18px;font-size:11px;font-weight:normal;color:#000;transform:scaleX(0.9600);transform-origin:right;">0,00</span>
<span id="t198" class="k" style="right:209.00px;top:458.18px;font-size:11px;font-weight:normal;color:#000;transform:scaleX(0.9600);transform-origin:right;">0,00</span>
<span id="t199" class="k" style="left:125.40px;top:473.58px;font-size:9px;font-weight:normal;color:#000;transform:scaleX(0.9056);transform-origin:left;">2.01.02.0006</span>
<span id="t200" class="k" style="left:218.20px;top:473.58px;font-size:9px;font-weight:normal;color:#000;transform:scaleX(0.9368);transform-origin:left;">CESTAS BÁSICAS</span>
<span id="t201" class="k" style="right:920.00px;top:476.18px;font-size:11px;font-weight:normal;color:#000;transform:scaleX(0.9600);transform-origin:right;">0,00</span>
<span id="t202" class="k" style="right:841.00px;top:476.18px;font-size:11px;font-weight:normal;color:#000;transform:scaleX(0.9600);transform-origin:right;">0,00</span>
<span id="t203" class="k" style="right:762.00px;top:476.18px;font-size:11px;font-weight:normal;color:#000;transform:scaleX(0.9600);transform-origin:right;">3362,90</span>
<span id="t204" class="k" style="right:683.00px;top:476.18px;font-size:11px;font-weight:normal;color:#000;transform:scaleX(0.9600);transform-origin:right;">0,00</span>
<span id="t205" class="k" style="right:604.00px;top:476.18px;font-size:11px;font-weight:normal;color:#000;transform:scaleX(0.9600);transform-origin:right;">0,00</span>
<span id="t206" class="k" style="right:525.00px;top:476.18px;font-size:11px;font-weight:normal;color:#000;transform:scaleX(0.9600);transform-origin:right;">0,00</span>
<span id="t207" class="k" style="right:446.00px;top:476.18px;font-size:11px;font-weight:normal;color:#000;transform:scaleX(0.9600);transform-origin:right;">0,00</span>
<span id="t208" class="k" style="right:367.00px;top:476.18px;font-size:11px;font-weight:normal;color:#000;transform:scaleX(0.9600);transform-origin:right;">3362,90</span>
<span id="t209" class="k" style="right:288.00px;top:476.18px;font-size:11px;font-weight:normal;color:#000;transform:scaleX(0.9600);transform-origin:right;">0,00</span>
<span id="t210" class="k" style="right:209.00px;top:476.18px;font-size:11px;font-weight:normal;color:#000;transform:scaleX(0.9600);transform-origin:right;">0,00</span>
<span id="t211" class="k" style="left:125.00px;top:494.04px;font-size:12px;font-weight:bold;color:#000;transform:scaleX(0.8700);transform-origin:left;">2.02</span>
<span id="t212" class="k" style="left:218.20px;top:494.04px;font-size:12px;font-weight:bold;color:#000;transform:scaleX(0.8976);transform-origin:left;">DESPESAS DE VENDAS</span>
<span id="t213" class="k" style="right:920.00px;top:495.18px;font-size:11px;font-weight:normal;color:#000;transform:scaleX(0.9600);transform-origin:right;">0,00</span>
<span id="t214" class="k" style="right:841.00px;top:495.18px;font-size:11px;font-weight:normal;color:#000;transform:scaleX(0.9600);transform-origin:right;">7152,86</span>
<span id="t215" class="k" style="right:762.00px;top:495.18px;font-size:11px;font-weight:normal;color:#000;transform:scaleX(0.9600);transform-origin:right;">0,00</span>
<span id="t216" class="k" style="right:683.00px;top:495.18px;font-size:11px;font-weight:normal;color:#000;transform:scaleX(0.9600);transform-origin:right;">0,00</span>
<span id="t217" class="k" style="right:604.00px;top:495.18px;font-size:11px;font-weight:normal;color:#000;transform:scaleX(0.9600);transform-origin:right;">0,00</span>
<span id="t218" class="k" style="right:525.00px;top:495.18px;font-size:11px;font-weight:normal;color:#000;transform:scaleX(0.9600);transform-origin:right;">0,00</span>
<span id="t219" class="k" style="right:446.00px;top:495.18px;font-size:11px;font-weight:normal;color:#000;transform:scaleX(0.9600);transform-origin:right;">0,00</span>
<span id="t220" class="k" style="right:367.00px;top:495.18px;font-size:11px;font-weight:normal;color:#000;transform:scaleX(0.9600);transform-origin:right;">7152,86</span>
<span id="t221" class="k" style="right:288.00px;top:495.18px;font-size:11px;font-weight:normal;color:#000;transform:scaleX(0.9600);transform-origin:right;">0,00</span>
<span id="t222" class="k" style="right:209.00px;top:495.18px;font-size:11px;font-weight:normal;color:#000;transform:scaleX(0.9600);transform-origin:right;">0,00</span>
<span id="t223" class="k" style="left:125.00px;top:512.54px;font-size:12px;font-weight:bold;color:#000;transform:scaleX(0.8700);transform-origin:left;">2.02.02</span>
<span id="t224" class="k" style="left:218.20px;top:512.54px;font-size:12px;font-weight:bold;color:#000;transform:scaleX(0.9019);transform-origin:left;">DESPESAS CONSULTOR</span>
<span id="t225" class="k" style="right:920.00px;top:513.18px;font-size:11px;font-weight:normal;color:#000;transform:scaleX(0.9600);transform-origin:right;">0,00</span>
<span id="t226" class="k" style="right:841.00px;top:513.18px;font-size:11px;font-weight:normal;color:#000;transform:scaleX(0.9600);transform-origin:right;">7152,86</span>
<span id="t227" class="k" style="right:762.00px;top:513.18px;font-size:11px;font-weight:normal;color:#000;transform:scaleX(0.9600);transform-origin:right;">0,00</span>
<span id="t228" class="k" style="right:683.00px;top:513.18px;font-size:11px;font-weight:normal;color:#000;transform:scaleX(0.9600);transform-origin:right;">0,00</span>
<span id="t229" class="k" style="right:604.00px;top:513.18px;font-size:11px;font-weight:normal;color:#000;transform:scaleX(0.9600);transform-origin:right;">0,00</span>
<span id="t230" class="k" style="right:525.00px;top:513.18px;font-size:11px;font-weight:normal;color:#000;transform:scaleX(0.9600);transform-origin:right;">0,00</span>
<span id="t231" class="k" style="right:446.00px;top:513.18px;font-size:11px;font-weight:normal;color:#000;transform:scaleX(0.9600);transform-origin:right;">0,00</span>
<span id="t232" class="k" style="right:367.00px;top:513.18px;font-size:11px;font-weight:normal;color:#000;transform:scaleX(0.9600);transform-origin:right;">7152,86</span>
<span id="t233" class="k" style="right:288.00px;top:513.18px;font-size:11px;font-weight:normal;color:#000;transform:scaleX(0.9600);transform-origin:right;">0,00</span>
<span id="t234" class="k" style="right:209.00px;top:513.18px;font-size:11px;font-weight:normal;color:#000;transform:scaleX(0.9600);transform-origin:right;">0,00</span>
<span id="t235" class="k" style="left:125.40px;top:529.58px;font-size:9px;font-weight:normal;color:#000;transform:scaleX(0.9056);transform-origin:left;">2.02.02.0003</span>
<span id="t236" class="k" style="left:218.20px;top:529.58px;font-size:9px;font-weight:normal;color:#000;transform:scaleX(0.9228);transform-origin:left;">REFEIÇÕES</span>
<span id="t237" class="k" style="right:920.00px;top:532.18px;font-size:11px;font-weight:normal;color:#000;transform:scaleX(0.9600);transform-origin:right;">0,00</span>
<span id="t238" class="k" style="right:841.00px;top:532.18px;font-size:11px;font-weight:normal;color:#000;transform:scaleX(0.9600);transform-origin:right;">7152,86</span>
<span id="t239" class="k" style="right:762.00px;top:532.18px;font-size:11px;font-weight:normal;color:#000;transform:scaleX(0.9600);transform-origin:right;">0,00</span>
<span id="t240" class="k" style="right:683.00px;top:532.18px;font-size:11px;font-weight:normal;color:#000;transform:scaleX(0.9600);transform-origin:right;">0,00</span>
<span id="t241" class="k" style="right:604.00px;top:532.18px;font-size:11px;font-weight:normal;color:#000;transform:scaleX(0.9600);transform-origin:right;">0,00</span>
<span id="t242" class="k" style="right:525.00px;top:532.18px;font-size:11px;font-weight:normal;color:#000;transform:scaleX(0.9600);transform-origin:right;">0,00</span>
<span id="t243" class="k" style="right:446.00px;top:532.18px;font-size:11px;font-weight:normal;color:#000;transform:scaleX(0.9600);transform-origin:right;">0,00</span>
<span id="t244" class="k" style="right:367.00px;top:532.18px;font-size:11px;font-weight:normal;color:#000;transform:scaleX(0.9600);transform-origin:right;">7152,86</span>
<span id="t245" class="k" style="right:288.00px;top:532.18px;font-size:11px;font-weight:normal;color:#000;transform:scaleX(0.9600);transform-origin:right;">0,00</span>
<span id="t246" class="k" style="right:209.00px;top:532.18px;font-size:11px;font-weight:normal;color:#000;transform:scaleX(0.9600);transform-origin:right;">0,00</span>
<span id="t247" class="k" style="left:125.00px;top:550.04px;font-size:12px;font-weight:bold;color:#000;transform:scaleX(0.8700);transform-origin:left;">2.03</span>
<span id="t248" class="k" style="left:218.20px;top:550.04px;font-size:12px;font-weight:bold;color:#000;transform:scaleX(0.8798);transform-origin:left;">DESPESAS</span>
<span id="t249" class="k" style="right:920.00px;top:551.18px;font-size:11px;font-weight:normal;color:#000;transform:scaleX(0.9600);transform-origin:right;">14103,26</span>
<span id="t250" class="k" style="right:841.00px;top:551.18px;font-size:11px;font-weight:normal;color:#000;transform:scaleX(0.9600);transform-origin:right;">29193,11</span>
<span id="t251" class="k" style="right:762.00px;top:551.18px;font-size:11px;font-weight:normal;color:#000;transform:scaleX(0.9600);transform-origin:right;">46883,39</span>
<span id="t252" class="k" style="right:683.00px;top:551.18px;font-size:11px;font-weight:normal;color:#000;transform:scaleX(0.9600);transform-origin:right;">0,00</span>
<span id="t253" class="k" style="right:604.00px;top:551.18px;font-size:11px;font-weight:normal;color:#000;transform:scaleX(0.9600);transform-origin:right;">0,00</span>
<span id="t254" class="k" style="right:525.00px;top:551.18px;font-size:11px;font-weight:normal;color:#000;transform:scaleX(0.9600);transform-origin:right;">0,00</span>
<span id="t255" class="k" style="right:446.00px;top:551.18px;font-size:11px;font-weight:normal;color:#000;transform:scaleX(0.9600);transform-origin:right;">0,00</span>
<span id="t256" class="k" style="right:367.00px;top:551.18px;font-size:11px;font-weight:normal;color:#000;transform:scaleX(0.9600);transform-origin:right;">90179,76</span>
<span id="t257" class="k" style="right:288.00px;top:551.18px;font-size:11px;font-weight:normal;color:#000;transform:scaleX(0.9600);transform-origin:right;">687077,08</span>
<span id="t258" class="k" style="right:209.00px;top:551.18px;font-size:11px;font-weight:normal;color:#000;transform:scaleX(0.9600);transform-origin:right;">74558,02</span>
<span id="t259" class="k" style="left:125.00px;top:566.54px;font-size:12px;font-weight:bold;color:#000;transform:scaleX(0.8700);transform-origin:left;">2.03.03</span>
<span id="t260" class="k" style="left:218.20px;top:566.54px;font-size:12px;font-weight:bold;color:#000;transform:scaleX(0.9019);transform-origin:left;">FORNECEDORES</span>
<span id="t261" class="k" style="right:920.00px;top:567.18px;font-size:11px;font-weight:normal;color:#000;transform:scaleX(0.9600);transform-origin:right;">14096,11</span>
<span id="t262" class="k" style="right:841.00px;top:567.18px;font-size:11px;font-weight:normal;color:#000;transform:scaleX(0.9600);transform-origin:right;">28862,58</span>
<span id="t263" class="k" style="right:762.00px;top:567.18px;font-size:11px;font-weight:normal;color:#000;transform:scaleX(0.9600);transform-origin:right;">46464,27</span>
<span id="t264" class="k" style="right:683.00px;top:567.18px;font-size:11px;font-weight:normal;color:#000;transform:scaleX(0.9600);transform-origin:right;">0,00</span>
<span id="t265" class="k" style="right:604.00px;top:567.18px;font-size:11px;font-weight:normal;color:#000;transform:scaleX(0.9600);transform-origin:right;">0,00</span>
<span id="t266" class="k" style="right:525.00px;top:567.18px;font-size:11px;font-weight:normal;color:#000;transform:scaleX(0.9600);transform-origin:right;">0,00</span>
<span id="t267" class="k" style="right:446.00px;top:567.18px;font-size:11px;font-weight:normal;color:#000;transform:scaleX(0.9600);transform-origin:right;">0,00</span>
<span id="t268" class="k" style="right:367.00px;top:567.18px;font-size:11px;font-weight:normal;color:#000;transform:scaleX(0.9600);transform-origin:right;">89422,96</span>
<span id="t269" class="k" style="right:288.00px;top:567.18px;font-size:11px;font-weight:normal;color:#000;transform:scaleX(0.9600);transform-origin:right;">686295,96</span>
<span id="t270" class="k" style="right:209.00px;top:567.18px;font-size:11px;font-weight:normal;color:#000;transform:scaleX(0.9600);transform-origin:right;">74558,02</span>
<span id="t271" class="k" style="left:125.40px;top:584.58px;font-size:9px;font-weight:normal;color:#000;transform:scaleX(0.9056);transform-origin:left;">2.03.03.0001</span>
<span id="t272" class="k" style="left:218.20px;top:584.58px;font-size:9px;font-weight:normal;color:#000;transform:scaleX(0.8962);transform-origin:left;">REVENDA</span>
<span id="t273" class="k" style="right:920.00px;top:587.18px;font-size:11px;font-weight:normal;color:#000;transform:scaleX(0.9600);transform-origin:right;">0,00</span>
<span id="t274" class="k" style="right:841.00px;top:587.18px;font-size:11px;font-weight:normal;color:#000;transform:scaleX(0.9600);transform-origin:right;">28195,71</span>
<span id="t275" class="k" style="right:762.00px;top:587.18px;font-size:11px;font-weight:normal;color:#000;transform:scaleX(0.9600);transform-origin:right;">46109,73</span>
<span id="t276" class="k" style="right:683.00px;top:587.18px;font-size:11px;font-weight:normal;color:#000;transform:scaleX(0.9600);transform-origin:right;">0,00</span>
<span id="t277" class="k" style="right:604.00px;top:587.18px;font-size:11px;font-weight:normal;color:#000;transform:scaleX(0.9600);transform-origin:right;">0,00</span>
<span id="t278" class="k" style="right:525.00px;top:587.18px;font-size:11px;font-weight:normal;color:#000;transform:scaleX(0.9600);transform-origin:right;">0,00</span>
<span id="t279" class="k" style="right:446.00px;top:587.18px;font-size:11px;font-weight:normal;color:#000;transform:scaleX(0.9600);transform-origin:right;">0,00</span>
<span id="t280" class="k" style="right:367.00px;top:587.18px;font-size:11px;font-weight:normal;color:#000;transform:scaleX(0.9600);transform-origin:right;">74305,44</span>
<span id="t281" class="k" style="right:288.00px;top:587.18px;font-size:11px;font-weight:normal;color:#000;transform:scaleX(0.9600);transform-origin:right;">686261,76</span>
<span id="t282" class="k" style="right:209.00px;top:587.18px;font-size:11px;font-weight:normal;color:#000;transform:scaleX(0.9600);transform-origin:right;">74558,02</span>
<span id="t283" class="k" style="left:125.40px;top:603.08px;font-size:9px;font-weight:normal;color:#000;transform:scaleX(0.9056);transform-origin:left;">2.03.03.0003</span>
<span id="t284" class="k" style="left:218.20px;top:603.08px;font-size:9px;font-weight:normal;color:#000;transform:scaleX(0.9629);transform-origin:left;">MATERIAIS ASSISTENCIA</span>
<span id="t285" class="k" style="right:920.00px;top:605.18px;font-size:11px;font-weight:normal;color:#000;transform:scaleX(0.9600);transform-origin:right;">11258,16</span>
<span id="t286" class="k" style="right:841.00px;top:605.18px;font-size:11px;font-weight:normal;color:#000;transform:scaleX(0.9600);transform-origin:right;">666,87</span>
<span id="t287" class="k" style="right:762.00px;top:605.18px;font-size:11px;font-weight:normal;color:#000;transform:scaleX(0.9600);transform-origin:right;">354,54</span>
<span id="t288" class="k" style="right:683.00px;top:605.18px;font-size:11px;font-weight:normal;color:#000;transform:scaleX(0.9600);transform-origin:right;">0,00</span>
<span id="t289" class="k" style="right:604.00px;top:605.18px;font-size:11px;font-weight:normal;color:#000;transform:scaleX(0.9600);transform-origin:right;">0,00</span>
<span id="t290" class="k" style="right:525.00px;top:605.18px;font-size:11px;font-weight:normal;color:#000;transform:scaleX(0.9600);transform-origin:right;">0,00</span>
<span id="t291" class="k" style="right:446.00px;top:605.18px;font-size:11px;font-weight:normal;color:#000;transform:scaleX(0.9600);transform-origin:right;">0,00</span>
<span id="t292" class="k" style="right:367.00px;top:605.18px;font-size:11px;font-weight:normal;color:#000;transform:scaleX(0.9600);transform-origin:right;">12279,57</span>
<span id="t293" class="k" style="right:288.00px;top:605.18px;font-size:11px;font-weight:normal;color:#000;transform:scaleX(0.9600);transform-origin:right;">34,20</span>
<span id="t294" class="k" style="right:209.00px;top:605.18px;font-size:11px;font-weight:normal;color:#000;transform:scaleX(0.9600);transform-origin:right;">0,00</span>
<span id="t295" class="k" style="left:125.40px;top:621.58px;font-size:9px;font-weight:normal;color:#000;transform:scaleX(0.9056);transform-origin:left;">2.03.03.0004</span>
<span id="t296" class="k" style="left:218.20px;top:621.58px;font-size:9px;font-weight:normal;color:#000;transform:scaleX(0.9437);transform-origin:left;">SERVIÇOS ASSISTÊNCIA</span>
<span id="t297" class="k" style="right:920.00px;top:624.18px;font-size:11px;font-weight:normal;color:#000;transform:scaleX(0.9600);transform-origin:right;">2837,95</span>
<span id="t298" class="k" style="right:841.00px;top:624.18px;font-size:11px;font-weight:normal;color:#000;transform:scaleX(0.9600);transform-origin:right;">0,00</span>
<span id="t299" class="k" style="right:762.00px;top:624.18px;font-size:11px;font-weight:normal;color:#000;transform:scaleX(0.9600);transform-origin:right;">0,00</span>
<span id="t300" class="k" style="right:683.00px;top:624.18px;font-size:11px;font-weight:normal;color:#000;transform:scaleX(0.9600);transform-origin:right;">0,00</span>
<span id="t301" class="k" style="right:604.00px;top:624.18px;font-size:11px;font-weight:normal;color:#000;transform:scaleX(0.9600);transform-origin:right;">0,00</span>
<span id="t302" class="k" style="right:525.00px;top:624.18px;font-size:11px;font-weight:normal;color:#000;transform:scaleX(0.9600);transform-origin:right;">0,00</span>
<span id="t303" class="k" style="right:446.00px;top:624.18px;font-size:11px;font-weight:normal;color:#000;transform:scaleX(0.9600);transform-origin:right;">0,00</span>
<span id="t304" class="k" style="right:367.00px;top:624.18px;font-size:11px;font-weight:normal;color:#000;transform:scaleX(0.9600);transform-origin:right;">2837,95</span>
<span id="t305" class="k" style="right:288.00px;top:624.18px;font-size:11px;font-weight:normal;color:#000;transform:scaleX(0.9600);transform-origin:right;">0,00</span>
<span id="t306" class="k" style="right:209.00px;top:624.18px;font-size:11px;font-weight:normal;color:#000;transform:scaleX(0.9600);transform-origin:right;">0,00</span>
<span id="t307" class="k" style="left:125.00px;top:641.54px;font-size:12px;font-weight:bold;color:#000;transform:scaleX(0.8700);transform-origin:left;">2.03.05</span>
<span id="t308" class="k" style="left:218.20px;top:641.54px;font-size:12px;font-weight:bold;color:#000;transform:scaleX(0.9019);transform-origin:left;">FORNECEDORES</span>
<span id="t309" class="k" style="right:920.00px;top:642.18px;font-size:11px;font-weight:normal;color:#000;transform:scaleX(0.9600);transform-origin:right;">0,00</span>
<span id="t310" class="k" style="right:841.00px;top:642.18px;font-size:11px;font-weight:normal;color:#000;transform:scaleX(0.9600);transform-origin:right;">330,53</span>
<span id="t311" class="k" style="right:762.00px;top:642.18px;font-size:11px;font-weight:normal;color:#000;transform:scaleX(0.9600);transform-origin:right;">419,12</span>
<span id="t312" class="k" style="right:683.00px;top:642.18px;font-size:11px;font-weight:normal;color:#000;transform:scaleX(0.9600);transform-origin:right;">0,00</span>
<span id="t313" class="k" style="right:604.00px;top:642.18px;font-size:11px;font-weight:normal;color:#000;transform:scaleX(0.9600);transform-origin:right;">0,00</span>
<span id="t314" class="k" style="right:525.00px;top:642.18px;font-size:11px;font-weight:normal;color:#000;transform:scaleX(0.9600);transform-origin:right;">0,00</span>
<span id="t315" class="k" style="right:446.00px;top:642.18px;font-size:11px;font-weight:normal;color:#000;transform:scaleX(0.9600);transform-origin:right;">0,00</span>
<span id="t316" class="k" style="right:367.00px;top:642.18px;font-size:11px;font-weight:normal;color:#000;transform:scaleX(0.9600);transform-origin:right;">749,65</span>
<span id="t317" class="k" style="right:288.00px;top:642.18px;font-size:11px;font-weight:normal;color:#000;transform:scaleX(0.9600);transform-origin:right;">781,12</span>
<span id="t318" class="k" style="right:209.00px;top:642.18px;font-size:11px;font-weight:normal;color:#000;transform:scaleX(0.9600);transform-origin:right;">0,00</span>
<span id="t319" class="k" style="left:125.40px;top:658.58px;font-size:9px;font-weight:normal;color:#000;transform:scaleX(0.9056);transform-origin:left;">2.03.05.0009</span>
<span id="t320" class="k" style="left:218.20px;top:658.58px;font-size:9px;font-weight:normal;color:#000;transform:scaleX(0.9368);transform-origin:left;">PRODUTOS ALIMENTÍCIOS</span>
<span id="t321" class="k" style="right:920.00px;top:661.18px;font-size:11px;font-weight:normal;color:#000;transform:scaleX(0.9600);transform-origin:right;">0,00</span>
<span id="t322" class="k" style="right:841.00px;top:661.18px;font-size:11px;font-weight:normal;color:#000;transform:scaleX(0.9600);transform-origin:right;">330,53</span>
<span id="t323" class="k" style="right:762.00px;top:661.18px;font-size:11px;font-weight:normal;color:#000;transform:scaleX(0.9600);transform-origin:right;">419,12</span>
<span id="t324" class="k" style="right:683.00px;top:661.18px;font-size:11px;font-weight:normal;color:#000;transform:scaleX(0.9600);transform-origin:right;">0,00</span>
<span id="t325" class="k" style="right:604.00px;top:661.18px;font-size:11px;font-weight:normal;color:#000;transform:scaleX(0.9600);transform-origin:right;">0,00</span>
<span id="t326" class="k" style="right:525.00px;top:661.18px;font-size:11px;font-weight:normal;color:#000;transform:scaleX(0.9600);transform-origin:right;">0,00</span>
<span id="t327" class="k" style="right:446.00px;top:661.18px;font-size:11px;font-weight:normal;color:#000;transform:scaleX(0.9600);transform-origin:right;">0,00</span>
<span id="t328" class="k" style="right:367.00px;top:661.18px;font-size:11px;font-weight:normal;color:#000;transform:scaleX(0.9600);transform-origin:right;">749,65</span>
<span id="t329" class="k" style="right:288.00px;top:661.18px;font-size:11px;font-weight:normal;color:#000;transform:scaleX(0.9600);transform-origin:right;">781,12</span>
<span id="t330" class="k" style="right:209.00px;top:661.18px;font-size:11px;font-weight:normal;color:#000;transform:scaleX(0.9600);transform-origin:right;">0,00</span>
<span id="t331" class="k" style="left:125.00px;top:679.04px;font-size:12px;font-weight:bold;color:#000;transform:scaleX(0.8700);transform-origin:left;">2.03.09</span>
<span id="t332" class="k" style="left:218.20px;top:679.04px;font-size:12px;font-weight:bold;color:#000;transform:scaleX(0.9184);transform-origin:left;">DESPESAS FINANCEIRAS</span>
<span id="t333" class="k" style="right:920.00px;top:680.18px;font-size:11px;font-weight:normal;color:#000;transform:scaleX(0.9600);transform-origin:right;">7,15</span>
<span id="t334" class="k" style="right:841.00px;top:680.18px;font-size:11px;font-weight:normal;color:#000;transform:scaleX(0.9600);transform-origin:right;">0,00</span>
<span id="t335" class="k" style="right:762.00px;top:680.18px;font-size:11px;font-weight:normal;color:#000;transform:scaleX(0.9600);transform-origin:right;">0,00</span>
<span id="t336" class="k" style="right:683.00px;top:680.18px;font-size:11px;font-weight:normal;color:#000;transform:scaleX(0.9600);transform-origin:right;">0,00</span>
<span id="t337" class="k" style="right:604.00px;top:680.18px;font-size:11px;font-weight:normal;color:#000;transform:scaleX(0.9600);transform-origin:right;">0,00</span>
<span id="t338" class="k" style="right:525.00px;top:680.18px;font-size:11px;font-weight:normal;color:#000;transform:scaleX(0.9600);transform-origin:right;">0,00</span>
<span id="t339" class="k" style="right:446.00px;top:680.18px;font-size:11px;font-weight:normal;color:#000;transform:scaleX(0.9600);transform-origin:right;">0,00</span>
<span id="t340" class="k" style="right:367.00px;top:680.18px;font-size:11px;font-weight:normal;color:#000;transform:scaleX(0.9600);transform-origin:right;">7,15</span>
<span id="t341" class="k" style="right:288.00px;top:680.18px;font-size:11px;font-weight:normal;color:#000;transform:scaleX(0.9600);transform-origin:right;">0,00</span>
<span id="t342" class="k" style="right:209.00px;top:680.18px;font-size:11px;font-weight:normal;color:#000;transform:scaleX(0.9600);transform-origin:right;">0,00</span>
<span id="t343" class="k" style="left:125.40px;top:696.08px;font-size:9px;font-weight:normal;color:#000;transform:scaleX(0.9056);transform-origin:left;">2.03.09.0002</span>
<span id="t344" class="k" style="left:218.20px;top:696.08px;font-size:9px;font-weight:normal;color:#000;transform:scaleX(0.9219);transform-origin:left;">DESPESAS BANCÁRIAS</span>
<span id="t345" class="k" style="right:920.00px;top:698.18px;font-size:11px;font-weight:normal;color:#000;transform:scaleX(0.9600);transform-origin:right;">7,15</span>
<span id="t346" class="k" style="right:841.00px;top:698.18px;font-size:11px;font-weight:normal;color:#000;transform:scaleX(0.9600);transform-origin:right;">0,00</span>
<span id="t347" class="k" style="right:762.00px;top:698.18px;font-size:11px;font-weight:normal;color:#000;transform:scaleX(0.9600);transform-origin:right;">0,00</span>
<span id="t348" class="k" style="right:683.00px;top:698.18px;font-size:11px;font-weight:normal;color:#000;transform:scaleX(0.9600);transform-origin:right;">0,00</span>
<span id="t349" class="k" style="right:604.00px;top:698.18px;font-size:11px;font-weight:normal;color:#000;transform:scaleX(0.9600);transform-origin:right;">0,00</span>
<span id="t350" class="k" style="right:525.00px;top:698.18px;font-size:11px;font-weight:normal;color:#000;transform:scaleX(0.9600);transform-origin:right;">0,00</span>
<span id="t351" class="k" style="right:446.00px;top:698.18px;font-size:11px;font-weight:normal;color:#000;transform:scaleX(0.9600);transform-origin:right;">0,00</span>
<span id="t352" class="k" style="right:367.00px;top:698.18px;font-size:11px;font-weight:normal;color:#000;transform:scaleX(0.9600);transform-origin:right;">7,15</span>
<span id="t353" class="k" style="right:288.00px;top:698.18px;font-size:11px;font-weight:normal;color:#000;transform:scaleX(0.9600);transform-origin:right;">0,00</span>
<span id="t354" class="k" style="right:209.00px;top:698.18px;font-size:11px;font-weight:normal;color:#000;transform:scaleX(0.9600);transform-origin:right;">0,00</span></div>
<div style="left:1px;top:699px;width:1356px;height:28px;background:#3e444f;"></div>
<svg style="position:absolute;left:8px;top:700px" width="22" height="22" viewBox="0 0 22 22"><ellipse cx="10.1" cy="6.6" rx="4.4" ry="5.2" fill="#f5f5f5"/><path d="M1.6 18.3 C2.4 15.4 5.2 14.2 8 13.2 L12.4 13.2 C15.2 14.2 17.8 15.4 18.6 18.3 Z" fill="#f5f5f5"/><path d="M8 10.5 L8 13.6 L12.2 13.6 L12.2 10.5 Z" fill="#f5f5f5"/></svg>
<div class="tl"><span id="t355" style="left:27.70px;top:710.38px;font-size:11px;font-weight:normal;color:#f4f4f4;transform:scaleX(0.8606);transform-origin:left;">DEMO</span></div></body></html>
